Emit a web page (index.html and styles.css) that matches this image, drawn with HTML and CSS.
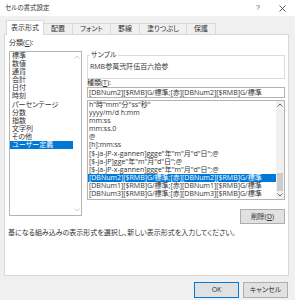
FILE: index.html
```html
<!DOCTYPE html>
<html lang="ja">
<head>
<meta charset="utf-8">
<title>セルの書式設定</title>
<link rel="stylesheet" href="styles.css">
</head>
<body>
<div class="dialog">
  <div class="titlebar">
    <span class="title">セルの書式設定</span>
    <span class="help">?</span>
    <svg class="close" width="7" height="7" viewBox="0 0 7 7"><path d="M0.5 0.5L6.5 6.5M6.5 0.5L0.5 6.5" stroke="#333" stroke-width="0.8" fill="none"/></svg>
  </div>
  <div class="tabs">
    <div class="tab active">表示形式</div>
    <div class="tab">配置</div>
    <div class="tab">フォント</div>
    <div class="tab">罫線</div>
    <div class="tab">塗りつぶし</div>
    <div class="tab">保護</div>
  </div>
  <div class="panel">
    <div class="main">
      <div class="col-left">
        <div class="label">分類(<u>C</u>):</div>
        <div class="listbox cat">
          <ul class="items">
            <li>標準</li>
            <li>数値</li>
            <li>通貨</li>
            <li>会計</li>
            <li>日付</li>
            <li>時刻</li>
            <li>パーセンテージ</li>
            <li>分数</li>
            <li>指数</li>
            <li>文字列</li>
            <li>その他</li>
            <li class="sel">ユーザー定義</li>
          </ul>
          <div class="sb plain">
            <svg class="arrow" width="6" height="4" viewBox="0 0 6 4"><polyline points="0.5,3.5 3,1 5.5,3.5" fill="none" stroke="#c4c4c4" stroke-width="0.9"/></svg>
            <svg class="arrow" width="6" height="4" viewBox="0 0 6 4"><polyline points="0.5,0.5 3,3 5.5,0.5" fill="none" stroke="#c4c4c4" stroke-width="0.9"/></svg>
          </div>
        </div>
      </div>
      <div class="col-right">
        <fieldset class="sample">
          <legend>サンプル</legend>
          <div class="sample-text">RMB参萬弐阡伍百六拾参</div>
        </fieldset>
        <div class="label small">種類(<u>T</u>):</div>
        <div class="input">[DBNum2][$RMB]G/標準;[赤][DBNum2][$RMB]G/標準</div>
        <div class="listbox types">
          <ul class="items">
            <li>h"時"mm"分"ss"秒"</li>
            <li>yyyy/m/d h:mm</li>
            <li>mm:ss</li>
            <li>mm:ss.0</li>
            <li>@</li>
            <li>[h]:mm:ss</li>
            <li>[$-ja-JP-x-gannen]ggge"年"m"月"d"日";@</li>
            <li>[$-ja-JP]gge"年"m"月"d"日";@</li>
            <li>[$-ja-JP-x-gannen]ggge"年"m"月"d"日";@</li>
            <li class="sel">[DBNum2][$RMB]G/標準;[赤][DBNum2][$RMB]G/標準</li>
            <li>[DBNum1][$RMB]G/標準;[赤][DBNum1][$RMB]G/標準</li>
            <li>[DBNum3][$RMB]G/標準;[赤][DBNum3][$RMB]G/標準</li>
          </ul>
          <div class="sb track">
            <div class="abox"><svg width="6" height="4" viewBox="0 0 6 4"><polyline points="0.5,3.5 3,1 5.5,3.5" fill="none" stroke="#606060" stroke-width="0.9"/></svg></div>
            <div class="rail"><div class="thumb"></div></div>
            <div class="abox"><svg width="6" height="4" viewBox="0 0 6 4"><polyline points="0.5,0.5 3,3 5.5,0.5" fill="none" stroke="#606060" stroke-width="0.9"/></svg></div>
          </div>
        </div>
        <div class="btnrow"><button class="btn">削除(<u>D</u>)</button></div>
      </div>
    </div>
    <p class="hint">基になる組み込みの表示形式を選択し、新しい表示形式を入力してください。</p>
  </div>
  <div class="footer">
    <button class="btn big default">OK</button>
    <button class="btn big">キャンセル</button>
  </div>
</div>
</body>
</html>
```

FILE: styles.css
```css
* { box-sizing: border-box; }
html, body { margin: 0; padding: 0; }
body {
  width: 295px;
  height: 300px;
  overflow: hidden;
  background: #f0f0f0;
  font-family: "Open Sans", "Noto Sans CJK JP", sans-serif;
  font-size: 7px;
  line-height: 8px;
  color: #333;
  font-feature-settings: "palt";
}
.dialog { display: flex; flex-direction: column; height: 300px; }

.titlebar {
  height: 16px;
  background: #fff;
  display: flex;
  align-items: center;
  padding: 0 9px 0 5px;
}
.title { flex: 1; font-size: 6.5px; color: #333; }
.help { margin-right: 19px; font-size: 7px; color: #555; font-family: "Liberation Sans", sans-serif; }
.close { display: block; }

.tabs {
  display: flex;
  align-items: flex-end;
  height: 19px;
  padding-left: 6px;
}
.tab {
  height: 12px;
  line-height: 9px;
  padding: 0 7px;
  border-top: 1px solid #d9d9d9;
  border-right: 1px solid #d9d9d9;
  color: #333;
}
.tab.active {
  position: relative;
  z-index: 1;
  height: 15px;
  line-height: 13px;
  padding: 0 4px;
  background: #fff;
  border: 1px solid #d9d9d9;
  border-bottom: none;
}

.panel {
  margin: -1px 6px 0 4px;
  height: 242px;
  border: 1px solid #d9d9d9;
  background: #fff;
  padding: 4px 3px 0 4px;
}
.main {
  display: grid;
  grid-template-columns: 73px 1fr;
  column-gap: 5px;
}
.label { height: 8px; line-height: 8px; margin-bottom: 4px; }
.label.small { height: 7px; line-height: 7px; margin-bottom: 1px; }

.listbox {
  display: flex;
  border: 1px solid #b4b4b4;
  background: #fff;
}
.listbox.cat { height: 165px; }
.listbox.types { height: 100px; margin-top: 2px; }
.items {
  flex: 1;
  min-width: 0;
  list-style: none;
  margin: 0;
  padding: 0;
  overflow: hidden;
}
.items li {
  line-height: 8.1px;
  height: 8.1px;
  white-space: nowrap;
  padding-left: 2px;
}
.types .items li { padding-left: 1px; }
.items li.sel { background: #0078d7; color: #fff; }

.sb { width: 8px; display: flex; flex-direction: column; }
.sb.plain { justify-content: space-between; align-items: center; padding: 3px 0 3px; }
.sb.track { background: #f0f0f0; }
.abox { height: 8px; display: flex; align-items: center; justify-content: center; }
.rail { flex: 1; display: flex; flex-direction: column; justify-content: flex-end; }
.thumb { height: 18px; background: #cdcdcd; margin: 0 1px; }

.sample {
  margin: 12px 0 0 0;
  padding: 4px 2px 7px 2px;
  border: 1px solid #dcdcdc;
  min-width: 0;
}
.sample legend { padding: 0 1px; line-height: 8px; }
.sample-text { line-height: 8px; white-space: nowrap; }

.input {
  height: 11px;
  border: 1px solid #b4b4b4;
  line-height: 9px;
  padding: 0 1px;
  white-space: nowrap;
  overflow: hidden;
}

.btnrow { display: flex; justify-content: flex-end; margin-top: 9px; }
.btn {
  width: 45px;
  height: 15px;
  padding: 0;
  border: 1px solid #adadad;
  background: #e1e1e1;
  font: inherit;
  color: #333;
  font-feature-settings: "palt";
}
.btn.big { height: 16px; }
.btn.default { border-color: #0078d7; }

.hint { margin: 5px 0 0 -1px; line-height: 8px; color: #333; }

.footer {
  display: flex;
  justify-content: flex-end;
  gap: 4px;
  padding: 6px 7px 0 0;
}
```
